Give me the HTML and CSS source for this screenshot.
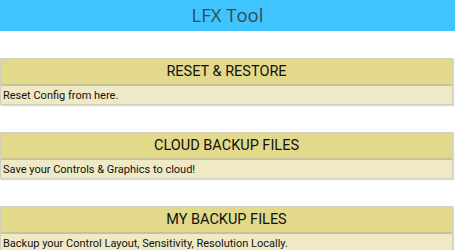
FILE: index.html
```html
<!DOCTYPE html>
<html lang="en">
<head>
    <meta charset="UTF-8">
    <title>LFX Tool</title>
    <link rel="stylesheet" href="styles.css">
</head>
<body>
    <div class="topbar">
        <h1>LFX Tool</h1>
    </div>
    <div class="cards">
        <div class="card">
            <div class="card-head">RESET &amp; RESTORE</div>
            <div class="card-body">Reset Config from here.</div>
        </div>
        <div class="card">
            <div class="card-head">CLOUD BACKUP FILES</div>
            <div class="card-body">Save your Controls &amp; Graphics to cloud!</div>
        </div>
        <div class="card">
            <div class="card-head">MY BACKUP FILES</div>
            <div class="card-body">Backup your Control Layout, Sensitivity, Resolution Locally.</div>
        </div>
    </div>
</body>
</html>
```

FILE: styles.css
```css
/*reset*/
* {
    padding: 0;
    margin: 0;
    box-sizing: border-box;
}

/*default*/
body {
    font: 12px/1 Roboto, sans-serif;
    color: #111;
    background-color: #fff;
}

/*top bar*/
.topbar {
    height: 31px;
    background-color: #40c4ff;
    display: flex;
    align-items: center;
    justify-content: center;
}
.topbar h1 {
    font: 400 18.5px/1 "Open Sans", sans-serif;
    color: #344a55;
}

/*cards*/
.cards {
    display: flex;
    flex-direction: column;
    gap: 27px;
    padding-top: 27px;
}
.card {
    width: 453px;
    border: 1px solid #d2cfbf;
    box-shadow: 1px 1px 1px rgba(0,0,0,.15);
}
.card-head {
    height: 27px;
    padding-top: 2px;
    background-color: #e2d98a;
    border-bottom: 2px solid #c8c29b;
    display: flex;
    align-items: center;
    justify-content: center;
    font-size: 14.5px;
    color: #111;
}
.card-body {
    height: 18px;
    background-color: #efe9c5;
    padding-left: 2px;
    display: flex;
    align-items: center;
    font-size: 11px;
}
```
